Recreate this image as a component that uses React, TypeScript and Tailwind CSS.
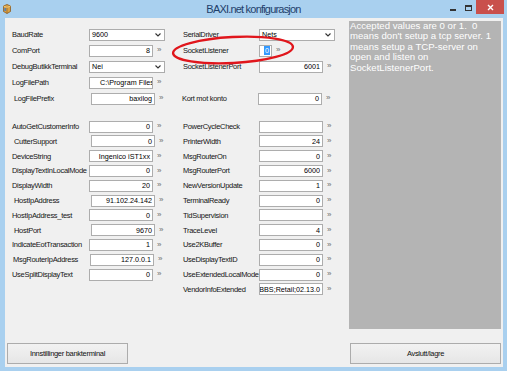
import React from 'react';

type Row = {
  label: string;
  value?: string;
  kind?: 'input' | 'select' | 'small' | 'path' | 'blank';
  shift?: number;
};

const leftTop: Row[] = [
  { label: 'BaudRate', value: '9600', kind: 'select' },
  { label: 'ComPort', value: '8' },
  { label: 'DebugButikkTerminal', value: 'Nei', kind: 'select' },
  { label: 'LogFilePath', value: 'C:\\Program Files', kind: 'path' },
  { label: 'LogFilePrefix', value: 'baxilog', shift: 2 },
];

const leftBottom: Row[] = [
  { label: 'AutoGetCustomerInfo', value: '0' },
  { label: 'CutterSupport', value: '0', shift: 2 },
  { label: 'DeviceString', value: 'Ingenico iST1xx' },
  { label: 'DisplayTextInLocalMode', value: '0' },
  { label: 'DisplayWidth', value: '20' },
  { label: 'HostIpAddress', value: '91.102.24.142', shift: 2 },
  { label: 'HostIpAddress_test', value: '0' },
  { label: 'HostPort', value: '9670', shift: 2 },
  { label: 'IndicateEotTransaction', value: '1' },
  { label: 'MsgRouterIpAddress', value: '127.0.0.1', shift: 1 },
  { label: 'UseSplitDisplayText', value: '0' },
];

const midTop: Row[] = [
  { label: 'SerialDriver', value: 'Nets', kind: 'select' },
  { label: 'SocketListener', value: '0', kind: 'small' },
  { label: 'SocketListenerPort', value: '6001' },
  { label: '', kind: 'blank' },
  { label: 'Kort mot konto', value: '0', shift: -1 },
];

const midBottom: Row[] = [
  { label: 'PowerCycleCheck', value: '' },
  { label: 'PrinterWidth', value: '24' },
  { label: 'MsgRouterOn', value: '0' },
  { label: 'MsgRouterPort', value: '6000' },
  { label: 'NewVersionUpdate', value: '1' },
  { label: 'TerminalReady', value: '0' },
  { label: 'TidSupervision', value: '' },
  { label: 'TraceLevel', value: '4' },
  { label: 'Use2KBuffer', value: '0' },
  { label: 'UseDisplayTextID', value: '0' },
  { label: 'UseExtendedLocalMode', value: '0' },
  { label: 'VendorInfoExtended', value: 'BBS;Retail;02.13.0' },
];

const Arrow = () => (
  <span className="ml-[4px] text-[8px] leading-none text-[#6f6f6f] -mt-[1px]">»</span>
);

const Chevron = () => (
  <svg width="6" height="4" viewBox="0 0 6 4" className="shrink-0">
    <path d="M0.5 0.5 L3 3 L5.5 0.5" fill="none" stroke="#333" strokeWidth="1.1" />
  </svg>
);

const Field: React.FC<{ row: Row; labelW: string; h: string }> = ({ row, labelW, h }) => {
  const shift =
    row.shift === 2 ? 'ml-[2px]' : row.shift === 1 ? 'ml-[1px]' : row.shift === -1 ? '-ml-[1px]' : '';

  if (row.kind === 'blank') return <div className={h} />;

  let box: React.ReactNode;
  if (row.kind === 'select') {
    box = (
      <div className="w-[76px] h-[12px] bg-white border border-[#acacac] flex items-center justify-between pl-[2px] pr-[3px] text-[7.2px] leading-none">
        <span>{row.value}</span>
        <Chevron />
      </div>
    );
  } else if (row.kind === 'small') {
    box = (
      <div className="w-[13px] h-[12px] bg-white border border-[#adadad] flex items-center justify-end pr-[1px] text-[7.2px] leading-none">
        <span className="bg-[#3399ff] text-white px-[1px] py-[1px]">{row.value}</span>
      </div>
    );
  } else if (row.kind === 'path') {
    box = (
      <div className="w-[64px] h-[12px] bg-white border border-[#adadad] flex items-center pl-[10px] text-[7.2px] leading-none overflow-hidden whitespace-nowrap">
        {row.value}
      </div>
    );
  } else {
    box = (
      <div className="w-[64px] h-[12px] bg-white border border-[#adadad] flex items-center justify-end pr-[2px] text-[7.2px] leading-none overflow-hidden whitespace-nowrap">
        {row.value}
      </div>
    );
  }

  return (
    <div className={`flex items-center ${h} ${shift}`}>
      <span className={`${labelW} shrink-0 text-[7.5px] tracking-[-0.3px] leading-none text-[#151515] whitespace-nowrap`}>
        {row.label}
      </span>
      {box}
      {row.kind !== 'select' && <Arrow />}
    </div>
  );
};

const Column: React.FC<{ top: Row[]; bottom: Row[]; labelW: string }> = ({ top, bottom, labelW }) => (
  <div className="flex flex-col pt-[8.5px]">
    {top.map((r, i) => (
      <Field key={i} row={r} labelW={labelW} h="h-[16px]" />
    ))}
    <div className="h-[12.8px]" />
    {bottom.map((r, i) => (
      <Field key={i} row={r} labelW={labelW} h="h-[14.8px]" />
    ))}
  </div>
);

const AppIcon = () => (
  <svg width="8" height="10" viewBox="0 0 8 10">
    <path d="M0.5 2 L4 0.5 L7.5 2 L7.5 7.5 L4 9.5 L0.5 7.5 Z" fill="#d9a247" stroke="#8a5a22" strokeWidth="0.8" />
    <path d="M0.5 2 L4 3.5 L7.5 2" fill="none" stroke="#f3d28a" strokeWidth="0.8" />
    <path d="M4 3.5 L4 9.5" stroke="#8a5a22" strokeWidth="0.6" />
    <rect x="1.3" y="4" width="1.8" height="3" fill="#5f7fa8" />
  </svg>
);

export default function App() {
  return (
    <div className="w-[511px] h-[374px] bg-white relative overflow-hidden font-['Liberation_Sans',Arial,sans-serif]">
      <div className="w-[507px] h-[371px] bg-[#a9d0ef] flex flex-col">
        {/* title bar */}
        <div className="h-[18px] grid grid-cols-[1fr_auto_1fr] items-start">
          <div className="pl-[3px] pt-[4px]">
            <AppIcon />
          </div>
          <div className="pt-[3px] text-[11px] leading-[12px] tracking-[-0.8px] text-[#1f3f6b]">
            BAXI.net konfigurasjon
          </div>
          <div className="flex justify-end items-start pr-[3px]">
            <div className="w-[6px] h-[1.5px] bg-[#333] mt-[9px] mr-[9px]" />
            <div className="w-[7px] h-[6px] border border-[#333] border-t-2 mt-[5px] mr-[4px]" />
            <div className="w-[28px] h-[14px] bg-[#c9504c] flex items-center justify-center">
              <svg width="7" height="7" viewBox="0 0 7 7">
                <path d="M1 1 L6 6 M6 1 L1 6" stroke="white" strokeWidth="1.4" />
              </svg>
            </div>
          </div>
        </div>

        {/* client area */}
        <div className="ml-[5px] mr-[4px] mb-[4px] flex-1 bg-[#f0f0f0] flex flex-col">
          <div className="h-[311px] flex">
            <div className="pl-[7px] grid grid-cols-[171px_166px]">
              <Column top={leftTop} bottom={leftBottom} labelW="w-[77px]" />
              <Column top={midTop} bottom={midBottom} labelW="w-[76px]" />
            </div>
            <div className="mt-[3px] w-[152px] h-[308px] bg-[#b4b4b4] text-white text-[9.6px] leading-[10.4px] pl-[1px] whitespace-nowrap">
              Accepted values are 0 or 1.&nbsp; 0
              <br />
              means don't setup a tcp server. 1
              <br />
              means setup a TCP-server on
              <br />
              open and listen on
              <br />
              SocketListenerPort.
            </div>
          </div>
          <div className="mt-[14px] flex justify-between px-[2px]">
            <button className="w-[121px] h-[21px] border border-[#acacac] bg-gradient-to-b from-[#f2f2f2] to-[#e6e6e6] text-[7.5px] tracking-[-0.3px] text-[#111]">
              Innstillinger bankterminal
            </button>
            <button className="w-[151px] h-[21px] border border-[#acacac] bg-gradient-to-b from-[#f2f2f2] to-[#e6e6e6] text-[7.5px] tracking-[-0.3px] text-[#111]">
              Avslutt/lagre
            </button>
          </div>
        </div>
      </div>

      {/* red highlight ring drawn over the form */}
      <svg className="absolute left-[168px] top-[32px] pointer-events-none" width="130" height="36" viewBox="0 0 130 36">
        <ellipse cx="65" cy="18" rx="60" ry="13" transform="rotate(-3 65 18)" fill="none" stroke="#e0161c" strokeWidth="2.4" />
      </svg>
    </div>
  );
}
